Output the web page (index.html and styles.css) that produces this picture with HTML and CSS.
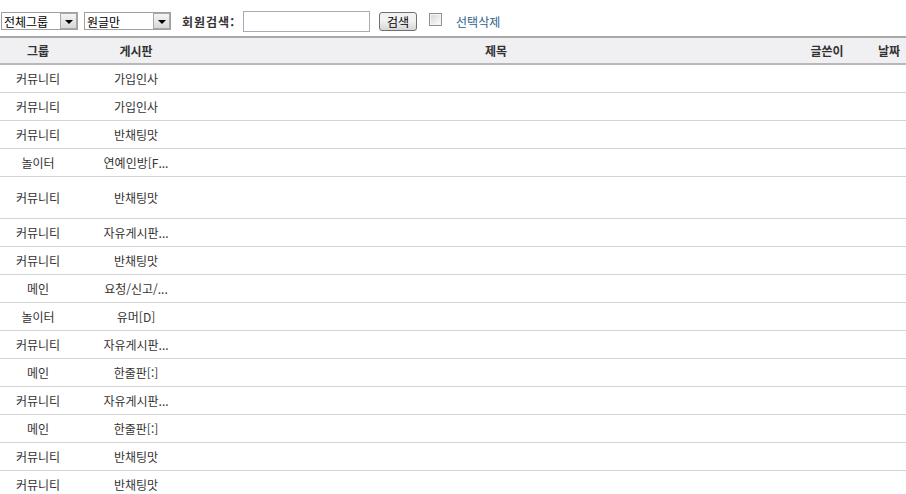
FILE: index.html
```html
<!DOCTYPE html>
<html lang="ko">

<head>
    <meta charset="UTF-8">
    <meta name="viewport" content="width=device-width, initial-scale=1.0">
    <title>게시물 관리</title>
    <link rel="stylesheet" href="styles.css">
</head>

<body>
    <div class="page">
        <form class="toolbar">
            <div class="select-box group-select">
                <select>
                    <option>전체그룹</option>
                </select>
                <span class="select-arrow"></span>
            </div>
            <div class="select-box type-select">
                <select>
                    <option>원글만</option>
                </select>
                <span class="select-arrow"></span>
            </div>
            <label class="search-label">회원검색:</label>
            <input class="search-input" type="text">
            <button class="search-btn" type="button">검색</button>
            <input class="check-all" type="checkbox">
            <a class="delete-link" href="#">선택삭제</a>
        </form>

        <table class="list">
            <colgroup>
                <col class="col-group">
                <col class="col-board">
                <col class="col-title">
                <col class="col-writer">
                <col class="col-date">
            </colgroup>
            <thead>
                <tr>
                    <th>그룹</th>
                    <th>게시판</th>
                    <th>제목</th>
                    <th>글쓴이</th>
                    <th>날짜</th>
                </tr>
            </thead>
            <tbody>
                <tr><td>커뮤니티</td><td>가입인사</td><td></td><td></td><td></td></tr>
                <tr><td>커뮤니티</td><td>가입인사</td><td></td><td></td><td></td></tr>
                <tr><td>커뮤니티</td><td>반채팅맛</td><td></td><td></td><td></td></tr>
                <tr><td>놀이터</td><td>연예인방[F...</td><td></td><td></td><td></td></tr>
                <tr class="tall"><td>커뮤니티</td><td>반채팅맛</td><td></td><td></td><td></td></tr>
                <tr><td>커뮤니티</td><td>자유게시판...</td><td></td><td></td><td></td></tr>
                <tr><td>커뮤니티</td><td>반채팅맛</td><td></td><td></td><td></td></tr>
                <tr><td>메인</td><td>요청/신고/...</td><td></td><td></td><td></td></tr>
                <tr><td>놀이터</td><td>유머[D]</td><td></td><td></td><td></td></tr>
                <tr><td>커뮤니티</td><td>자유게시판...</td><td></td><td></td><td></td></tr>
                <tr><td>메인</td><td>한줄판[:]</td><td></td><td></td><td></td></tr>
                <tr><td>커뮤니티</td><td>자유게시판...</td><td></td><td></td><td></td></tr>
                <tr><td>메인</td><td>한줄판[:]</td><td></td><td></td><td></td></tr>
                <tr><td>커뮤니티</td><td>반채팅맛</td><td></td><td></td><td></td></tr>
                <tr><td>커뮤니티</td><td>반채팅맛</td><td></td><td></td><td></td></tr>
            </tbody>
        </table>
    </div>
</body>

</html>
```

FILE: styles.css
```css
* {
    margin: 0px;
    padding: 0px;
    box-sizing: border-box;
}

body {
    font-family: "Noto Sans CJK KR", "Noto Sans", sans-serif;
    font-size: 12px;
    color: #333;
    background-color: white;
}

.page {
    width: 100%;
    overflow: hidden;
}

/* top search bar */
.toolbar {
    display: flex;
    align-items: center;
    height: 36px;
    padding-top: 6px;
    padding-left: 1px;
}

.select-box {
    position: relative;
    height: 18px;
    border: 1px solid #a0a0a0;
    background-color: white;
}

.group-select {
    width: 77px;
}

.type-select {
    width: 87px;
    margin-left: 6px;
}

.select-box select {
    appearance: none;
    -webkit-appearance: none;
    border: none;
    outline: none;
    background: transparent;
    width: 100%;
    height: 16px;
    padding-left: 2px;
    font-family: "Noto Sans CJK KR", sans-serif;
    font-size: 12px;
    line-height: 16px;
    color: black;
}

.select-arrow {
    position: absolute;
    top: 0px;
    right: 0px;
    width: 17px;
    height: 16px;
    background: linear-gradient(#f4f4f4, #d8d8d8);
    border: 1px solid #a8a8a8;
    pointer-events: none;
}

.select-arrow::after {
    content: '';
    position: absolute;
    left: 4px;
    top: 6px;
    border-left: 4px solid transparent;
    border-right: 4px solid transparent;
    border-top: 4px solid black;
}

.search-label {
    margin-left: 11px;
    font-weight: bold;
    color: #333;
    letter-spacing: 1px;
}

.search-input {
    width: 127px;
    height: 21px;
    margin-left: 8px;
    border: 1px solid #a5acb5;
    outline: none;
}

.search-btn {
    width: 38px;
    height: 19px;
    margin-left: 9px;
    border: 1px solid #707070;
    border-radius: 3px;
    background: linear-gradient(#f2f2f2 45%, #d6d6d6);
    font-family: "Noto Sans CJK KR", sans-serif;
    font-size: 12px;
    line-height: 15px;
    color: black;
}

.check-all {
    appearance: none;
    -webkit-appearance: none;
    width: 13px;
    height: 13px;
    margin-left: 12px;
    margin-top: -4px;
    border: 1px solid #8e8f8f;
    background: linear-gradient(135deg, #d4d4d8, #ffffff);
    box-shadow: inset 0 0 0 1px #f4f4f4;
}

.delete-link {
    margin-left: 14px;
    color: #2f5f8c;
    text-decoration: none;
}

/* list table */
.list {
    width: 920px;
    table-layout: fixed;
    border-collapse: separate;
    border-spacing: 0;
}

.col-group {
    width: 76px;
}

.col-board {
    width: 120px;
}

.col-title {
    width: 600px;
}

.col-writer {
    width: 62px;
}

.col-date {
    width: 62px;
}

.list thead th {
    height: 29px;
    background-color: #f0f0f2;
    border-top: 2px solid #a8a8a8;
    border-bottom: 2px solid #b8b8b8;
    font-weight: bold;
    color: #333;
    text-align: center;
}

.list tbody td {
    height: 28px;
    border-bottom: 1px solid #d4d4d4;
    text-align: center;
    color: #333;
    white-space: nowrap;
    overflow: hidden;
}

.list tbody tr.tall td {
    height: 42px;
}
```
